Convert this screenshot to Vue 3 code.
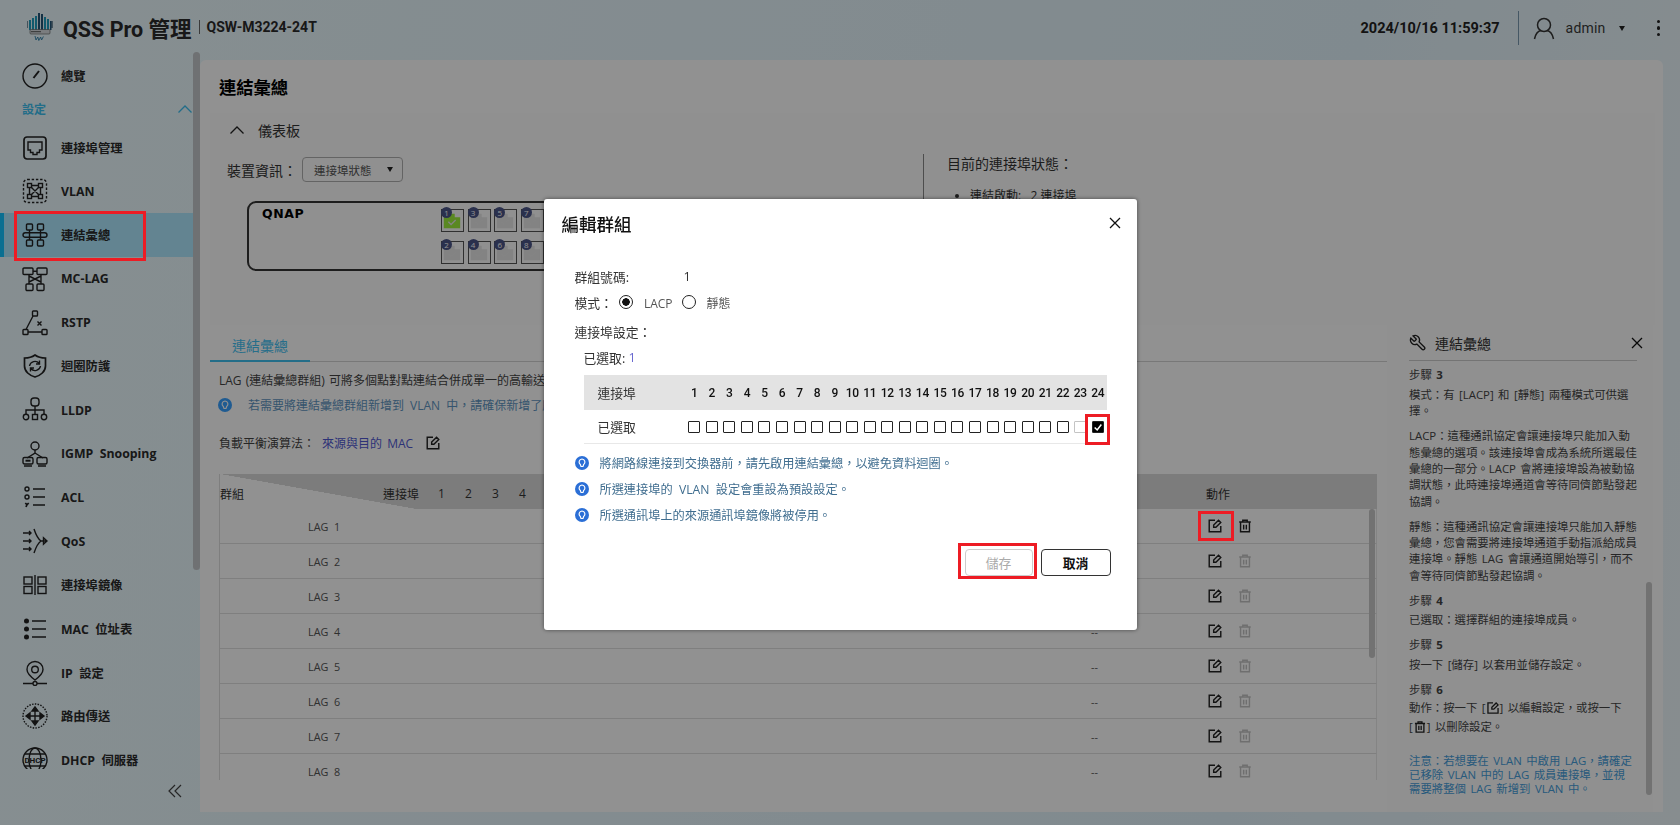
<script setup>
const navTop = { label: '總覽', icon: '<circle cx="13" cy="13" r="12"/><path d="M11.5 15 17 8" stroke-width="2"/>' }

const navItems = [
  { label: '連接埠管理', icon: '<rect x="2" y="2" width="22" height="22" rx="3" stroke-width="1.7"/><path d="M6 7h14v8h-2.5v2.5H15v2h-4v-2H8.5V15H6z"/>' },
  { label: 'VLAN', icon: '<rect x="1.5" y="1.5" width="23" height="23" rx="4" stroke-dasharray="2.4 1.8"/><rect x="5.5" y="5.5" width="4" height="4"/><rect x="16.5" y="5.5" width="4" height="4"/><rect x="5.5" y="16.5" width="4" height="4"/><rect x="16.5" y="16.5" width="4" height="4"/><path d="M9.5 9.5l7 7M16.5 9.5l-7 7M9.5 7.5h7M9.5 18.5h7M7.5 9.5v7M18.5 9.5v7"/>' },
  { label: '連結彙總', active: true, icon: '<rect x="4.5" y="2" width="6" height="6" rx="1"/><rect x="15.5" y="2" width="6" height="6" rx="1"/><rect x="4.5" y="18" width="6" height="6" rx="1"/><rect x="15.5" y="18" width="6" height="6" rx="1"/><path d="M7.5 8v10M18.5 8v10"/><rect x="1" y="10.7" width="24" height="4.6" rx="2.3"/>' },
  { label: 'MC-LAG', icon: '<rect x="1" y="2" width="10" height="6.5" rx="1"/><rect x="15" y="2" width="10" height="6.5" rx="1"/><rect x="4" y="18" width="7" height="6.5" rx="1"/><rect x="15" y="18" width="7" height="6.5" rx="1"/><path d="M7 8.5v9.5M19 8.5v9.5M11 5.2h4M7 10l12 6M19 10 7 16"/>' },
  { label: 'RSTP', icon: '<rect x="10.5" y="1" width="5" height="5" rx=".8"/><rect x="1" y="19.5" width="5" height="5" rx=".8"/><rect x="20" y="19.5" width="5" height="5" rx=".8"/><path d="M11 6 4 19.5M6 22h14M15.5 11.5l4 4M19.5 11.5l-4 4"/>' },
  { label: '迴圈防護', icon: '<path d="M13 2C9.5 4.5 6 5 2.5 5v8c0 5.5 5 9.5 10.5 11 5.5-1.5 10.5-5.5 10.5-11V5C20 5 16.5 4.5 13 2z" stroke-width="1.7"/><path d="M7.5 13a5.5 5.5 0 0 1 9.7-2.5M18.5 13a5.5 5.5 0 0 1-9.7 2.5M17.5 7.5V11H14M8.5 18.5V15H12"/>' },
  { label: 'LLDP', icon: '<rect x="9" y="1" width="8" height="8" rx="3"/><path d="M13 9v4M4 17v-4h18v4M13 13v4"/><circle cx="4" cy="20" r="2.7"/><rect x="10.5" y="17.5" width="5" height="5"/><circle cx="22" cy="20" r="2.7"/>' },
  { label: 'IGMP  Snooping', icon: '<circle cx="13" cy="5" r="4"/><path d="M13 9v3L5 17M13 12l8 5"/><rect x="1" y="16.5" width="10" height="6.5" rx="1.5"/><path d="M3.5 19.7h5" stroke-width="2"/><rect x="15" y="16.5" width="10" height="6.5" rx="1.5"/><path d="M2 25h8M16 25h8"/>' },
  { label: 'ACL', icon: '<circle cx="5" cy="4" r="2"/><circle cx="5" cy="12" r="2"/><path d="M3.3 18 5 19.7 6.7 18M5 19.7 4 22M11 4h12M11 12h12M11 20h12" stroke-width="1.7"/>' },
  { label: 'QoS', icon: '<path d="M1 5h8M7 3l2 2-2 2M1 13h8M7 11l2 2-2 2M1 21h8M7 19l2 2-2 2M12 1c2 6 4 10 7 12-3 2-5 6-7 12M19 13h5M21.5 9.8 25 13l-3.5 3.2z"/>' },
  { label: '連接埠鏡像', icon: '<rect x="2" y="5" width="8" height="7"/><rect x="2" y="14.5" width="8" height="7"/><rect x="16" y="5" width="8" height="7"/><rect x="16" y="14.5" width="8" height="7"/><path d="M13 3v20"/>' },
  { label: 'MAC  位址表', icon: '<circle cx="4.5" cy="5" r="1.8" fill="#222"/><circle cx="4.5" cy="13" r="1.8" fill="#222"/><circle cx="4.5" cy="21" r="1.8" fill="#222"/><path d="M10 5h14M10 13h14M10 21h14" stroke-width="1.5"/>' },
  { label: 'IP  設定', icon: '<path d="M13 1.5a8 8 0 0 0-8 8c0 4.5 8 10.5 8 10.5s8-6 8-10.5a8 8 0 0 0-8-8z"/><circle cx="13" cy="9.5" r="3.3"/><circle cx="13" cy="23.5" r="2"/><path d="M1 23.5h10M15 23.5h10"/>' },
  { label: '路由傳送', icon: '<circle cx="13" cy="13" r="12" stroke-dasharray="1.5 1.3"/><path d="M13 4l3 4h-6zM13 22l3-4h-6zM4 13l4-3v6zM22 13l-4-3v6z" fill="#222"/><path d="M13 8v10M8 13h10"/>' },
  { label: 'DHCP  伺服器', icon: '<circle cx="13" cy="13" r="12"/><ellipse cx="13" cy="13" rx="6" ry="12"/><path d="M3 7h20M3 19h20"/><text x="13" y="16" text-anchor="middle" font-size="8" font-family="Roboto" font-weight="700" fill="#222" stroke="none">DHCP</text>' },
]

const ports = Array.from({ length: 24 }, (_, i) => i + 1)
const topPorts = [1, 3, 5, 7]
const bottomPorts = [2, 4, 6, 8]
const lagRows = [1, 2, 3, 4, 5, 6, 7, 8]
const tips = [
  '將網路線連接到交換器前，請先啟用連結彙總，以避免資料迴圈。',
  '所選連接埠的  VLAN  設定會重設為預設設定。',
  '所選通訊埠上的來源通訊埠鏡像將被停用。',
]
</script>

<template>
  <div class="page">
    <header class="topbar">
      <svg class="logo" viewBox="0 0 26 30" width="26" height="30">
        <path d="M0 9v7M25 9v7" stroke="#2b4a63" stroke-width="1.2" />
        <g fill="#1f9fc0">
          <rect x="2" y="8" width="2" height="10" />
          <rect x="5" y="6" width="2" height="12" />
          <rect x="8" y="4" width="2" height="14" />
          <rect x="17" y="5" width="2" height="13" />
          <rect x="20" y="7" width="2" height="11" />
        </g>
        <g fill="#24567a">
          <rect x="11" y="1" width="2" height="17" />
          <rect x="14" y="2" width="2" height="16" />
          <rect x="23" y="9" width="1.5" height="9" />
        </g>
        <rect x="3" y="17.5" width="20" height="4.5" rx="1" fill="#d8dcdf" stroke="#555" stroke-width=".6" />
        <path d="M4 19.7h10" stroke="#555" stroke-width="1" />
        <path d="M8 24l1 4 1.800-3 1 3.500 1.800-3.500 1 3 1.800-3.500" fill="none" stroke="#2f7fa8" stroke-width=".9" />
      </svg>
      <span class="app-title">QSS Pro 管理</span>
      <span class="model">QSW-M3224-24T</span>
      <div class="top-right">
        <span class="clock">2024/10/16 11:59:37</span>
        <span class="top-sep"></span>
        <svg class="user" viewBox="0 0 24 24" width="24" height="24" fill="none" stroke="#333" stroke-width="1.5">
          <circle cx="12" cy="9" r="6.5" />
          <path d="M2.5 23c1-5 4-8 6.500-8.500M21.500 23c-1-5-4-8-6.500-8.500" />
        </svg>
        <span class="user-name">admin</span>
        <span class="caret"></span>
        <span class="kebab"><i></i><i></i><i></i></span>
      </div>
    </header>

    <div class="shell">
      <aside class="sidebar">
        <nav class="nav">
          <div class="nav-item">
            <svg class="nav-icon" viewBox="0 0 26 26" v-html="navTop.icon"></svg>
            <span>{{ navTop.label }}</span>
          </div>
          <div class="nav-group">
            <span>設定</span>
            <svg viewBox="0 0 14 8" width="14" height="8" fill="none" stroke="#3cc0f0" stroke-width="1.3"><path d="M.5 7.5 7 1l6.500 6.500" /></svg>
          </div>
          <div v-for="item in navItems" :key="item.label" class="nav-item" :class="{ active: item.active }">
            <svg class="nav-icon" viewBox="0 0 26 26" v-html="item.icon"></svg>
            <span>{{ item.label }}</span>
            <i v-if="item.active" class="mark mark-nav"></i>
          </div>
        </nav>
        <div class="side-foot">
          <svg viewBox="0 0 14 14" width="14" height="14" fill="none" stroke="#444" stroke-width="1.2"><path d="M7 1 1 7l6 6M13 1 7 7l6 6" /></svg>
        </div>
        <span class="side-scroll"></span>
      </aside>

      <main class="main">
        <h1 class="page-title">連結彙總</h1>

        <section class="dash">
          <div class="dash-head">
            <svg viewBox="0 0 14 8" width="14" height="8" fill="none" stroke="#222" stroke-width="1.3"><path d="M.5 7.5 7 1l6.500 6.500" /></svg>
            <span>儀表板</span>
          </div>
          <div class="dash-body">
            <div class="dash-left">
              <div class="device-row">
                <span>裝置資訊：</span>
                <div class="select"><span>連接埠狀態</span><i class="caret"></i></div>
              </div>
              <div class="device">
                <span class="qnap">QNAP</span>
                <div class="port-grid">
                  <div v-for="n in topPorts" :key="n" class="port" :class="{ up: n === 1 }">
                    <svg viewBox="0 0 22 22" width="20" height="20"><path d="M2 4h12v4h6v12H2z" class="port-fill" /><path d="M7 13l3 3 5-5" fill="none" stroke="#e8e8e8" stroke-width="1.4" /></svg>
                    <b>{{ n }}</b>
                  </div>
                  <div v-for="n in bottomPorts" :key="n" class="port">
                    <svg viewBox="0 0 22 22" width="20" height="20"><path d="M2 4h12v4h6v12H2z" class="port-fill" /><path d="M7 13l3 3 5-5" fill="none" stroke="#e8e8e8" stroke-width="1.4" /></svg>
                    <b>{{ n }}</b>
                  </div>
                </div>
              </div>
            </div>
            <div class="dash-right">
              <div class="status-title">目前的連接埠狀態：</div>
              <ul class="status-list">
                <li>連結啟動:&nbsp;&nbsp;&nbsp;2 連接埠</li>
              </ul>
            </div>
          </div>
        </section>

        <section class="lower">
          <div class="lag">
            <div class="tabs"><span class="tab">連結彙總</span></div>
            <p class="lag-intro">LAG (連結彙總群組) 可將多個點對點連結合併成單一的高輸送量連結，以提升頻寬並提供備援。</p>
            <div class="lag-tip">
              <svg class="tip-icon dim" viewBox="0 0 14 14" width="14" height="14"><circle cx="7" cy="7" r="7" /><path d="M7 3a3 3 0 0 0-1.700 5.400L6 10.500h2l.7-2.100A3 3 0 0 0 7 3z" fill="none" stroke="#fff" stroke-width="1.2" /></svg>
              <span>若需要將連結彙總群組新增到 VLAN 中，請確保新增了所有成員連接埠。</span>
            </div>
            <div class="algo">
              <span>負載平衡演算法：</span>
              <span class="algo-val">來源與目的 MAC</span>
              <svg class="edit" viewBox="0 0 18 18" width="16" height="16" fill="none" stroke="#222" stroke-width="1.6"><path d="M9 2.5H2.5v13h13V9" /><path d="M7.5 10.5V8L13 2.500 15.500 5 10 10.500z" /></svg>
            </div>

            <div class="lag-table">
              <div class="t-head">
                <i class="t-corner"></i>
                <span class="t-group">群組</span>
                <span class="t-port">連接埠</span>
                <div class="t-nums"><span v-for="n in ports" :key="n">{{ n }}</span></div>
                <span class="t-action">動作</span>
              </div>
              <div class="t-body">
                <div v-for="n in lagRows" :key="n" class="t-row">
                  <span class="t-name">LAG&nbsp;&nbsp;{{ n }}</span>
                  <span class="t-val">--</span>
                  <span class="t-acts">
                    <span class="act-edit">
                      <svg viewBox="0 0 18 18" width="16" height="16" fill="none" stroke="#222" stroke-width="1.6"><path d="M9 2.5H2.5v13h13V9" /><path d="M7.5 10.5V8L13 2.500 15.500 5 10 10.500z" /></svg>
                      <i v-if="n === 1" class="mark mark-edit"></i>
                    </span>
                    <svg class="trash" :class="{ off: n !== 1 }" viewBox="0 0 18 18" width="16" height="16" fill="none" stroke-width="1.6"><path d="M2.5 4.5h13M6.5 4.5V2.500h5v2M4 4.500v11h10v-11M7.500 7.500v5.500M10.500 7.500v5.500" /></svg>
                  </span>
                </div>
                <span class="t-scroll"></span>
              </div>
            </div>
          </div>

          <aside class="help">
            <div class="help-head">
              <svg viewBox="0 0 24 24" width="18" height="18" fill="none" stroke="#222" stroke-width="1.8"><path transform="matrix(-1 0 0 1 24 0)" d="M14.7 6.3a1 1 0 0 0 0 1.4l1.6 1.6a1 1 0 0 0 1.4 0l3.77-3.77a6 6 0 0 1-7.94 7.94l-6.91 6.91a2.12 2.12 0 0 1-3-3l6.91-6.91a6 6 0 0 1 7.94-7.94l-3.76 3.76z" /></svg>
              <span>連結彙總</span>
              <svg class="help-close" viewBox="0 0 12 12" width="12" height="12" fill="none" stroke="#111" stroke-width="1.3"><path d="M1 1l10 10M11 1 1 11" /></svg>
            </div>
            <div class="help-body">
              <div class="step first">步驟 <b>3</b></div>
              <p class="after-step">模式：有 [LACP] 和 [靜態] 兩種模式可供選<br>擇。</p>
              <p>LACP：這種通訊協定會讓連接埠只能加入動<br>態彙總的選項。該連接埠會成為系統所選最佳<br>彙總的一部分。LACP 會將連接埠設為被動協<br>調狀態，此時連接埠通道會等待同儕節點發起<br>協調。</p>
              <p>靜態：這種通訊協定會讓連接埠只能加入靜態<br>彙總，您會需要將連接埠通道手動指派給成員<br>連接埠。靜態 LAG 會讓通道開始導引，而不<br>會等待同儕節點發起協調。</p>
              <div class="step">步驟 <b>4</b></div>
              <p class="after-step">已選取：選擇群組的連接埠成員。</p>
              <div class="step">步驟 <b>5</b></div>
              <p class="after-step">按一下 [儲存] 以套用並儲存設定。</p>
              <div class="step">步驟 <b>6</b></div>
              <p class="after-step tall">動作：按一下 [<svg class="inline-ico" viewBox="0 0 18 18" width="14" height="14" fill="none" stroke="#222" stroke-width="1.7"><path d="M9 2.5H2.5v13h13V9" /><path d="M7.5 10.5V8L13 2.500 15.500 5 10 10.500z" /></svg>] 以編輯設定，或按一下<br>[<svg class="inline-ico" viewBox="0 0 18 18" width="14" height="14" fill="none" stroke="#222" stroke-width="1.7"><path d="M2.5 4.5h13M6.5 4.5V2.500h5v2M4 4.500v11h10v-11M7.500 7.500v5.500M10.500 7.500v5.500" /></svg>] 以刪除設定。</p>
              <p class="note">注意：若想要在 VLAN 中啟用 LAG，請確定<br>已移除 VLAN 中的 LAG 成員連接埠，並視<br>需要將整個 LAG 新增到 VLAN 中。</p>
            </div>
            <span class="help-scroll"></span>
          </aside>
        </section>
      </main>
    </div>

    <div class="overlay">
      <div class="dialog">
        <div class="dlg-head">
          <h2>編輯群組</h2>
          <svg viewBox="0 0 12 12" width="12" height="12" fill="none" stroke="#111" stroke-width="1.3"><path d="M1 1l10 10M11 1 1 11" /></svg>
        </div>
        <div class="dlg-body">
          <div class="form-row"><span class="group-label">群組號碼:</span><span class="group-no">1</span></div>
          <div class="form-row">
            <span>模式：</span>
            <span class="radio on"></span><span class="radio-text">LACP</span>
            <span class="radio second"></span><span class="radio-text">靜態</span>
          </div>
          <div class="form-row port-set">連接埠設定：</div>
          <div class="form-row selected-line">已選取:&nbsp;<span class="sel-count">1</span></div>

          <div class="port-table">
            <div class="pt-head">
              <span>連接埠</span>
              <span v-for="n in ports" :key="n" class="pt-num">{{ n }}</span>
            </div>
            <div class="pt-row">
              <span>已選取</span>
              <span v-for="n in ports" :key="n" class="pt-cell">
                <i class="cb" :class="{ faded: n === 23, checked: n === 24 }">
                  <svg v-if="n === 24" viewBox="0 0 12 12" width="10" height="10" fill="none" stroke="#fff" stroke-width="1.8"><path d="M2 6.5 5 9.500 10 3" /></svg>
                </i>
                <i v-if="n === 24" class="mark mark-cb"></i>
              </span>
            </div>
          </div>

          <div v-for="tip in tips" :key="tip" class="tip">
            <svg class="tip-icon" viewBox="0 0 14 14" width="14" height="14"><circle cx="7" cy="7" r="7" /><path d="M7 3a3 3 0 0 0-1.700 5.400L6 10.500h2l.7-2.100A3 3 0 0 0 7 3z" fill="none" stroke="#fff" stroke-width="1.2" /></svg>
            <span>{{ tip }}</span>
          </div>

          <div class="dlg-actions">
            <button class="btn btn-save">儲存<i class="mark mark-save"></i></button>
            <button class="btn">取消</button>
          </div>
        </div>
      </div>
    </div>
  </div>
</template>

<style scoped>
.page {
  position: relative;
  width: 1680px;
  height: 825px;
  overflow: hidden;
  display: flex;
  flex-direction: column;
  background: linear-gradient(100deg, #ecfaff 0%, #e2f3fb 75%, #eef8fc 100%);
  font-family: "Open Sans", "Noto Sans CJK TC", sans-serif;
  font-size: 12px;
  color: #333;
  white-space: pre-wrap;
}

/* top bar */
.topbar {
  flex: 0 0 54px;
  display: flex;
  align-items: center;
  padding: 0 20px 0 27px;
}
.logo {
  flex: none;
}
.app-title {
  margin-left: 10px;
  font-family: Roboto, "Noto Sans CJK TC", sans-serif;
  font-size: 21.5px;
  font-weight: 700;
  color: #2b2b2b;
  white-space: nowrap;
}
.model {
  margin-left: 7px;
  padding-left: 7px;
  border-left: 1px solid #666;
  font-family: Roboto, sans-serif;
  font-size: 14px;
  font-weight: 700;
  line-height: 14px;
  color: #2b2b2b;
}
.top-right {
  margin-left: auto;
  display: flex;
  align-items: center;
  padding-top: 2px;
}
.clock {
  font-family: Roboto, sans-serif;
  font-size: 14.5px;
  font-weight: 700;
  color: #222;
}
.top-sep {
  width: 1px;
  height: 34px;
  margin: 0 13px 0 18px;
  background: #7a9ab0;
}
.user-name {
  margin-left: 10px;
  font-family: Roboto, sans-serif;
  font-size: 14px;
  letter-spacing: .2px;
  color: #3a3a3a;
}
.caret {
  display: inline-block;
  width: 0;
  height: 0;
  border-left: 3.5px solid transparent;
  border-right: 3.5px solid transparent;
  border-top: 5px solid #222;
}
.user-name + .caret {
  margin-left: 13px;
}
.kebab {
  margin-left: 32px;
  display: flex;
  flex-direction: column;
  gap: 3px;
}
.kebab i {
  width: 3.5px;
  height: 3.5px;
  border-radius: 50%;
  background: #222;
}

.shell {
  flex: 1;
  display: flex;
  min-height: 0;
}

/* sidebar */
.sidebar {
  position: relative;
  flex: 0 0 200px;
  display: flex;
  flex-direction: column;
}
.nav {
  flex: 0 0 715px;
  overflow: hidden;
}
.nav-item {
  position: relative;
  height: 43.75px;
  display: flex;
  align-items: center;
  gap: 13px;
  padding-left: 22px;
  font-weight: 700;
  font-size: 12.3px;
  color: #2b2b2b;
}
.nav-item.active {
  background: #aee8ff;
  box-shadow: inset 4px 0 0 #12c4ff;
}
.nav-icon {
  flex: none;
  width: 26px;
  height: 26px;
  fill: none;
  stroke: #222;
  stroke-width: 1.4;
}
.nav-group {
  height: 28px;
  box-sizing: border-box;
  padding: 0 8px 6px 22px;
  display: flex;
  align-items: center;
  justify-content: space-between;
  font-weight: 700;
  color: #3cc0f0;
}
.side-foot {
  flex: 1;
  padding: 15px 18px 0 0;
  display: flex;
  justify-content: flex-end;
}
.side-scroll {
  position: absolute;
  top: -2px;
  left: 193px;
  width: 7px;
  height: 518px;
  border-radius: 4px;
  background: #c4c7ca;
}

/* main card */
.main {
  flex: 0 0 1463px;
  height: 752px;
  margin-top: 6px;
  border-radius: 6px 6px 0 0;
  background: #fff;
  display: flex;
  flex-direction: column;
}
.page-title {
  flex: 0 0 53px;
  margin: 0;
  padding: 14px 0 0 19px;
  box-sizing: border-box;
  font-size: 17.3px;
  font-weight: 700;
  line-height: 28px;
  color: #000;
}
.dash {
  flex: 0 0 212px;
  margin: 0 8px 0 10px;
  padding-left: 17px;
  background: #fdfdfd;
  overflow: hidden;
}
.dash-head {
  height: 24px;
  margin-top: 5px;
  padding-left: 3px;
  display: flex;
  align-items: center;
  gap: 14px;
  font-size: 14px;
  color: #333;
}
.dash-body {
  margin-top: 12px;
  display: flex;
}
.dash-left {
  flex: 0 0 696px;
  padding-top: 3px;
  box-sizing: border-box;
}
.device-row {
  display: flex;
  align-items: center;
  gap: 5px;
  font-size: 14px;
  color: #333;
}
.select {
  width: 101px;
  height: 25px;
  box-sizing: border-box;
  padding: 0 9px 0 11px;
  border: 1px solid #b0b0b0;
  border-radius: 4px;
  display: flex;
  align-items: center;
  justify-content: space-between;
  font-size: 11.5px;
  color: #555;
}
.device {
  position: relative;
  width: 640px;
  height: 70px;
  margin: 19px 0 0 20px;
  box-sizing: border-box;
  border: 2px solid #333;
  border-radius: 9px;
}
.qnap {
  position: absolute;
  top: 3px;
  left: 13px;
  font-family: "DejaVu Sans", sans-serif;
  font-size: 12.5px;
  font-weight: 700;
  letter-spacing: .6px;
  color: #000;
}
.port-grid {
  position: absolute;
  top: 6px;
  left: 192px;
  display: grid;
  grid-template-columns: repeat(4, 23px);
  column-gap: 3.6px;
  row-gap: 9px;
}
.port {
  position: relative;
  width: 23px;
  height: 23px;
  box-sizing: border-box;
  border: 1.5px solid #555;
}
.port svg {
  display: block;
}
.port-fill {
  fill: #e6e6e6;
}
.port.up .port-fill {
  fill: #9ff03c;
}
.port b {
  position: absolute;
  top: -3px;
  left: -1px;
  width: 11px;
  height: 11px;
  border-radius: 50%;
  background: #4a5588;
  color: #fff;
  font-size: 8px;
  font-weight: 400;
  line-height: 11px;
  text-align: center;
}
.dash-right {
  flex: 1;
  border-left: 1px solid #888;
  padding-left: 23px;
  color: #333;
}
.status-title {
  font-size: 14px;
  line-height: 20px;
}
.status-list {
  margin: 12px 0 0;
  padding-left: 23px;
  font-size: 12px;
  line-height: 20px;
}

/* lower area */
.lower {
  flex: 1;
  min-height: 0;
  display: flex;
}
.lag {
  flex: 0 0 1177px;
  margin-left: 10px;
  min-width: 0;
}
.tabs {
  height: 37px;
  box-sizing: border-box;
  border-bottom: 1px solid #d4d4d4;
  display: flex;
  align-items: flex-end;
}
.tab {
  width: 100px;
  height: 37px;
  box-sizing: border-box;
  padding-top: 11px;
  border-bottom: 2px solid #3fc0f0;
  margin-bottom: -1px;
  text-align: center;
  font-size: 14px;
  line-height: 20px;
  color: #45c2f2;
}
.lag-intro {
  margin: 8px 0 0 9px;
  font-size: 12px;
  line-height: 22px;
  color: #444;
  word-spacing: 1px;
}
.lag-tip {
  height: 22px;
  margin: 2px 0 0 8px;
  display: flex;
  align-items: center;
  gap: 16px;
  font-size: 12px;
  color: #6095c1;
  word-spacing: 3px;
}
.tip-icon {
  flex: none;
  fill: #2b6fd6;
}
.tip-icon.dim {
  fill: #38a0ff;
}
.algo {
  height: 22px;
  margin: 16px 0 0 9px;
  display: flex;
  align-items: center;
  gap: 7px;
  font-size: 12px;
  color: #444;
}
.algo-val {
  color: #4f58d2;
  word-spacing: 2px;
}
.edit {
  margin-left: 5px;
}
.lag-table {
  margin: 20px 10px 0 9px;
  border-left: 1px solid #ddd;
}
.t-head {
  position: relative;
  height: 35px;
  padding-top: 4px;
  box-sizing: border-box;
  background: #dbdbdb;
  display: flex;
  align-items: center;
  font-size: 12px;
  color: #333;
}
.t-corner {
  position: absolute;
  top: 0;
  left: 0;
  width: 196px;
  height: 35px;
  background: linear-gradient(to top right, #fff 50%, transparent 50.2%);
}
.t-group {
  position: relative;
  width: 163px;
}
.t-port {
  position: relative;
  width: 55px;
}
.t-nums {
  display: flex;
  width: 664px;
}
.t-nums span {
  flex: 0 0 27px;
}
.t-action {
  position: absolute;
  left: 986px;
}
.t-body {
  position: relative;
  height: 271px;
  overflow: hidden;
}
.t-row {
  height: 35px;
  box-sizing: border-box;
  border-bottom: 1px solid #e0e0e0;
  border-right: 1px solid #e8e8e8;
  display: flex;
  align-items: center;
  font-size: 10.8px;
  color: #555;
}
.t-name {
  width: 871px;
  padding-left: 88px;
  box-sizing: border-box;
}
.t-val {
  width: 116px;
}
.t-acts {
  display: flex;
  align-items: center;
  gap: 14px;
}
.act-edit {
  position: relative;
  display: flex;
}
.trash {
  stroke: #222;
}
.trash.off {
  stroke: #c4c4c4;
}
.t-scroll {
  position: absolute;
  top: 0;
  right: 2px;
  width: 6px;
  height: 149px;
  border-radius: 3px;
  background: #c8c8c8;
}

/* help panel */
.help {
  position: relative;
  flex: 0 0 266px;
  padding-left: 22px;
  box-sizing: border-box;
  color: #444;
  background: #fdfdfd;
}
.help-head {
  width: 228px;
  height: 36px;
  box-sizing: border-box;
  border-bottom: 1px solid #ccc;
  display: flex;
  align-items: center;
  gap: 8px;
  font-size: 14px;
  color: #333;
}
.help-close {
  margin-left: auto;
  margin-right: -6px;
}
.help-body {
  height: 438px;
  padding-top: 6px;
  box-sizing: border-box;
  overflow: hidden;
  font-size: 11.4px;
  line-height: 16.3px;
  word-spacing: 1.5px;
  white-space: pre-wrap;
}
.help-body p {
  margin: 9px 0 0;
  white-space: nowrap;
}
.help-body .after-step {
  margin-top: 3.5px;
}
.help-body .tall {
  margin-top: 1px;
  line-height: 18.5px;
}
.help-body .note {
  margin-top: 18px;
  line-height: 14px;
  color: #469edb;
}
.step {
  margin-top: 8.5px;
}
.step.first {
  margin-top: 0;
}
.step b {
  font-weight: 700;
}
.inline-ico {
  vertical-align: -3px;
}
.help-scroll {
  position: absolute;
  top: 257px;
  left: 259px;
  width: 6px;
  height: 213px;
  border-radius: 3px;
  background: #c8c8c8;
}

/* dialog */
.overlay {
  position: fixed;
  inset: 0;
  z-index: 50;
  padding-top: 4px;
  box-sizing: border-box;
  background: rgba(0, 0, 0, .43);
  display: flex;
  align-items: center;
  justify-content: center;
}
.dialog {
  width: 593px;
  height: 431px;
  background: #fff;
  border-radius: 3px;
  box-shadow: 0 0 4px rgba(0, 0, 0, .5);
}
.dlg-head {
  height: 48px;
  padding: 0 16px 0 18px;
  display: flex;
  align-items: center;
  justify-content: space-between;
}
.dlg-head h2 {
  margin: 0;
  font-size: 17.5px;
  font-weight: 500;
  color: #111;
}
.dlg-body {
  padding: 16px 26px 0 31px;
  font-size: 12.8px;
  color: #333;
}
.form-row {
  height: 26px;
  display: flex;
  align-items: center;
}
.group-label {
  width: 109px;
}
.radio {
  width: 14px;
  height: 14px;
  margin-left: 6px;
  box-sizing: border-box;
  border: 1.5px solid #222;
  border-radius: 50%;
}
.radio.on {
  background: radial-gradient(circle, #111 3.5px, #fff 4px);
}
.radio.second {
  margin-left: 0;
}
.radio-text {
  margin: 0 9px 0 11px;
  padding-top: 2px;
  font-size: 12px;
  color: #555;
}
.port-set {
  margin-top: 3px;
}
.selected-line {
  padding-left: 9px;
}
.sel-count {
  color: #6a6ad0;
}
.port-table {
  width: 523px;
  margin: 5px 0 0 9px;
}
.pt-head,
.pt-row {
  display: grid;
  grid-template-columns: 102px repeat(24, 17.55px);
  align-items: center;
}
.pt-head {
  height: 35px;
  background: #e3e3e3;
}
.pt-head > span:first-child,
.pt-row > span:first-child {
  padding-left: 14px;
}
.pt-num {
  font-family: Roboto, sans-serif;
  font-size: 12px;
  font-weight: 500;
  text-align: center;
  color: #111;
  letter-spacing: -.3px;
}
.pt-row {
  height: 34px;
  box-sizing: border-box;
  border-bottom: 1px solid #e8e8e8;
}
.pt-cell {
  position: relative;
  display: flex;
  justify-content: center;
}
.cb {
  width: 12px;
  height: 12px;
  box-sizing: border-box;
  border: 1.4px solid #222;
  border-radius: 1px;
  display: flex;
  align-items: center;
  justify-content: center;
}
.cb.faded {
  border-color: #c4c4c4;
}
.cb.checked {
  background: #000;
}
.tip {
  height: 26px;
  display: flex;
  align-items: center;
  gap: 11px;
  font-size: 12.2px;
  color: #3f6d8f;
}
.port-table + .tip {
  margin-top: 6px;
}
.dlg-actions {
  margin-top: 21px;
  display: flex;
  justify-content: flex-end;
  gap: 8px;
}
.btn {
  position: relative;
  width: 70px;
  height: 27px;
  border: 1px solid #333;
  border-radius: 4px;
  background: #fff;
  font-family: inherit;
  font-size: 12.8px;
  font-weight: 700;
  color: #111;
  padding: 0;
}
.btn-save {
  width: 68px;
  border-color: #ccc;
  color: #aaa;
  font-weight: 400;
}

/* red annotations from the manual */
.mark {
  position: absolute;
  box-sizing: border-box;
  border: 3px solid #ed1c24;
  z-index: 60;
}
.mark-nav {
  top: -2px;
  left: 14px;
  width: 132px;
  height: 50px;
}
.mark-edit {
  top: -7px;
  left: -9px;
  width: 35.5px;
  height: 30px;
}
.mark-cb {
  top: -7px;
  left: -4px;
  width: 25px;
  height: 31px;
}
.mark-save {
  top: -7px;
  left: -8px;
  width: 79px;
  height: 36px;
}
</style>

<style>
html,
body {
  margin: 0;
  background: #fff;
}
</style>
